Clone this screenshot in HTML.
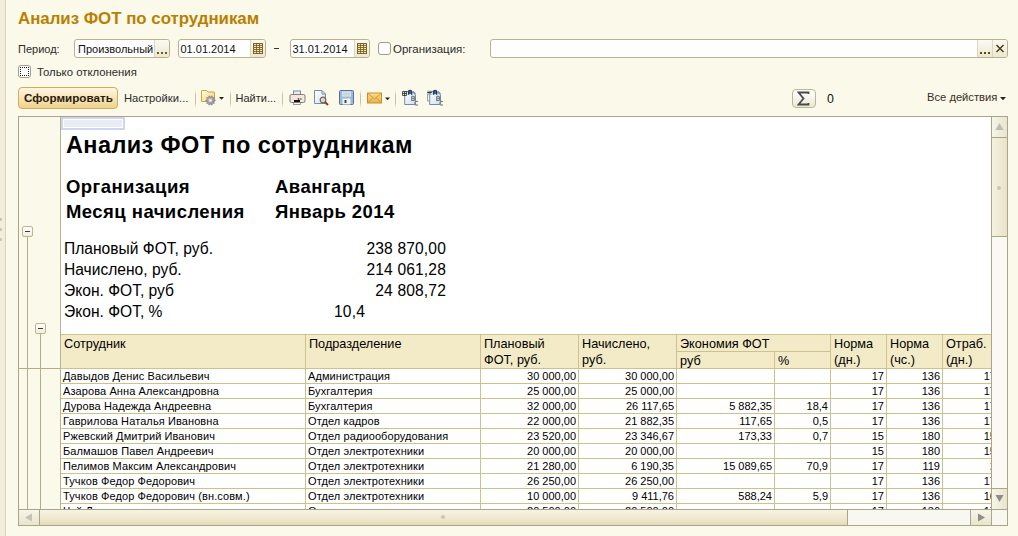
<!DOCTYPE html>
<html><head><meta charset="utf-8">
<style>
*{margin:0;padding:0;box-sizing:border-box}
html,body{width:1018px;height:536px;overflow:hidden;background:#FBF9EA;font-family:"Liberation Sans",sans-serif;font-size:11px;color:#222}
.a{position:absolute;white-space:nowrap}
.fld{position:absolute;background:#fff;border:1px solid #BBB18A;border-radius:3px}
.fb{position:absolute;border-left:1px solid #DCD6BE;background:linear-gradient(#FBFAF3,#ECE7D2)}
</style></head><body>

<div class="a" style="left:0px;top:0px;width:5px;height:536px;background:#F2EEDB"></div>
<div class="a" style="left:5px;top:0px;width:1px;height:536px;background:#D9D3BA"></div>
<div class="a" style="left:0px;top:218px;width:2px;height:3px;background:#C9C5B2;border-radius:0 1px 1px 0"></div>
<div class="a" style="left:0px;top:228px;width:2px;height:3px;background:#C9C5B2;border-radius:0 1px 1px 0"></div>
<div class="a" style="left:0px;top:238px;width:2px;height:3px;background:#C9C5B2;border-radius:0 1px 1px 0"></div>
<div class="a" style="top:9.61px;font-size:17px;line-height:17px;color:#B88000;font-weight:bold;left:18px;transform:scaleX(0.99);transform-origin:left;">Анализ ФОТ по сотрудникам</div>
<div class="a" style="top:43.69px;font-size:11px;line-height:11px;color:#2C2C2C;left:18px;">Период:</div>
<div class="fld" style="left:74px;top:39px;width:96px;height:19px"></div>
<div class="fb" style="left:154px;top:40px;width:15px;height:17px;border-radius:0 2px 2px 0"></div>
<div class="a" style="top:43.69px;font-size:11px;line-height:11px;color:#111;left:78px;">Произвольный</div>
<div class="a" style="left:157px;top:52px;width:10px;height:2px;background:repeating-linear-gradient(90deg,#6A5A24 0 2px,transparent 2px 4px)"></div>
<div class="fld" style="left:178px;top:39px;width:88px;height:19px"></div>
<div class="fb" style="left:250px;top:40px;width:15px;height:17px;border-radius:0 2px 2px 0"></div>
<svg class="a" style="left:253px;top:43px" width="10" height="11" viewBox="0 0 10 11"><rect x="0.5" y="0.5" width="9" height="10" fill="#F2E6B8" stroke="#7A6326"/><path d="M0 2.5H10M0 4.5H10M0 6.5H10M0 8.5H10M3.5 0V11M6.5 0V11" stroke="#7A6326" stroke-width="0.9"/></svg>
<div class="a" style="top:43.69px;font-size:11px;line-height:11px;color:#111;left:180.5px;">01.01.2014</div>
<div class="a" style="left:274px;top:48px;width:5px;height:1px;background:#333"></div>
<div class="fld" style="left:290px;top:39px;width:80px;height:19px"></div>
<div class="fb" style="left:354px;top:40px;width:15px;height:17px;border-radius:0 2px 2px 0"></div>
<svg class="a" style="left:357px;top:43px" width="10" height="11" viewBox="0 0 10 11"><rect x="0.5" y="0.5" width="9" height="10" fill="#F2E6B8" stroke="#7A6326"/><path d="M0 2.5H10M0 4.5H10M0 6.5H10M0 8.5H10M3.5 0V11M6.5 0V11" stroke="#7A6326" stroke-width="0.9"/></svg>
<div class="a" style="top:43.69px;font-size:11px;line-height:11px;color:#111;left:292.5px;">31.01.2014</div>
<div class="a" style="left:378px;top:42px;width:13px;height:13px;background:#fff;border:1px solid #A39C80;border-radius:3px"></div>
<div class="a" style="top:43.69px;font-size:11px;line-height:11px;color:#2C2C2C;left:393px;transform:scaleX(1.045);transform-origin:left;">Организация:</div>
<div class="fld" style="left:490px;top:39px;width:518px;height:19px"></div>
<div class="fb" style="left:977px;top:40px;width:15px;height:17px"></div>
<div class="fb" style="left:992px;top:40px;width:15px;height:17px;border-radius:0 2px 2px 0"></div>
<div class="a" style="left:980px;top:52px;width:10px;height:2px;background:repeating-linear-gradient(90deg,#5A4A14 0 2px,transparent 2px 4px)"></div>
<svg class="a" style="left:995px;top:44px" width="10" height="9" viewBox="0 0 10 9"><path d="M1.5 1L8.5 8M8.5 1L1.5 8" stroke="#4E3F10" stroke-width="1.5"/></svg>
<div class="a" style="left:18px;top:65px;width:13px;height:13px;background:#FFFFFF;border:1px solid #A49E82;border-radius:3px"></div>
<div class="a" style="left:20px;top:67px;width:9px;height:9px;border:1px dotted #10183A"></div>
<div class="a" style="top:66.69px;font-size:11px;line-height:11px;color:#2C2C2C;left:37.3px;transform:scaleX(1.03);transform-origin:left;">Только отклонения</div>
<div class="a" style="left:18px;top:87px;width:100px;height:22px;border:1px solid #D3AC5A;border-radius:4px;background:linear-gradient(#FDF6E2,#F6E5B8 50%,#EFD18E)"></div>
<div class="a" style="top:92.69px;font-size:11px;line-height:11px;color:#2A2010;font-weight:bold;left:23.5px;transform:scaleX(1.06);transform-origin:left;">Сформировать</div>
<div class="a" style="top:92.69px;font-size:11px;line-height:11px;color:#2C2C2C;left:123.5px;transform:scaleX(1.02);transform-origin:left;">Настройки...</div>
<div class="a" style="left:195px;top:90px;width:1px;height:18px;background:linear-gradient(rgba(200,190,150,0),#C9C0A0 30%,#C9C0A0 70%,rgba(200,190,150,0))"></div>
<div class="a" style="left:230px;top:90px;width:1px;height:18px;background:linear-gradient(rgba(200,190,150,0),#C9C0A0 30%,#C9C0A0 70%,rgba(200,190,150,0))"></div>
<div class="a" style="left:282px;top:90px;width:1px;height:18px;background:linear-gradient(rgba(200,190,150,0),#C9C0A0 30%,#C9C0A0 70%,rgba(200,190,150,0))"></div>
<div class="a" style="left:360px;top:90px;width:1px;height:18px;background:linear-gradient(rgba(200,190,150,0),#C9C0A0 30%,#C9C0A0 70%,rgba(200,190,150,0))"></div>
<div class="a" style="left:395px;top:90px;width:1px;height:18px;background:linear-gradient(rgba(200,190,150,0),#C9C0A0 30%,#C9C0A0 70%,rgba(200,190,150,0))"></div>
<div class="a" style="top:92.69px;font-size:11px;line-height:11px;color:#2C2C2C;left:235.5px;transform:scaleX(1.0);transform-origin:left;">Найти...</div>
<svg class="a" style="left:200px;top:89px" width="26" height="18" viewBox="0 0 26 18">
<defs><linearGradient id="fg" x1="0" y1="0" x2="1" y2="1"><stop offset="0" stop-color="#FFFDF0"/><stop offset="0.6" stop-color="#F8E49A"/><stop offset="1" stop-color="#EFCB62"/></linearGradient>
<radialGradient id="gg" cx="0.45" cy="0.45" r="0.6"><stop offset="0" stop-color="#F4F4F8"/><stop offset="0.3" stop-color="#B4B4BE"/><stop offset="1" stop-color="#7C7C88"/></radialGradient></defs>
<path d="M1.5 2Q1.5 1.5 2 1.5H6.5L8 3H14Q14.5 3 14.5 3.5V12Q14.5 12.5 14 12.5H2Q1.5 12.5 1.5 12Z" fill="url(#fg)" stroke="#CFA23A"/>
<path d="M13.96 10.95L15.18 11.06L15.18 11.94L13.96 12.05L13.62 13.09L14.55 13.89L14.03 14.61L12.97 13.97L12.09 14.62L12.37 15.81L11.53 16.09L11.05 14.96L9.95 14.96L9.47 16.09L8.63 15.81L8.91 14.62L8.03 13.97L6.97 14.61L6.45 13.89L7.38 13.09L7.04 12.05L5.82 11.94L5.82 11.06L7.04 10.95L7.38 9.91L6.45 9.11L6.97 8.39L8.03 9.03L8.91 8.38L8.63 7.19L9.47 6.91L9.95 8.04L11.05 8.04L11.53 6.91L12.37 7.19L12.09 8.38L12.97 9.03L14.03 8.39L14.55 9.11L13.62 9.91Z" fill="url(#gg)" stroke="#7E7E8A" stroke-width="0.6"/>
<circle cx="10.5" cy="11.5" r="1.2" fill="#F0F0F4"/>
<path d="M19 8H24L21.5 10.8Z" fill="#2A2212"/>
</svg>
<svg class="a" style="left:289px;top:90px" width="17" height="16" viewBox="0 0 17 16">
<rect x="4.5" y="1" width="7" height="4" fill="#E6EEF5" stroke="#7D8C9A"/>
<rect x="1" y="4.5" width="15" height="8" rx="1.5" fill="#EFE7E0" stroke="#8B7C70"/>
<rect x="5" y="10" width="6" height="2.5" fill="#111"/>
<rect x="4.5" y="12.5" width="7" height="2" fill="#F5F5F5" stroke="#777" stroke-width="0.7"/>
<circle cx="9.5" cy="9" r="0.9" fill="#E02020"/><circle cx="11.8" cy="9" r="0.9" fill="#20B040"/>
</svg>
<svg class="a" style="left:313px;top:89px" width="17" height="17" viewBox="0 0 17 17">
<defs><linearGradient id="pg" x1="0" y1="0" x2="1" y2="1"><stop offset="0" stop-color="#FFFFFF"/><stop offset="1" stop-color="#D6E4F2"/></linearGradient></defs>
<path d="M1.5 1.5H9L12.5 5V14.5H1.5Z" fill="url(#pg)" stroke="#6F8FAF"/>
<path d="M9 1.5V5H12.5" fill="none" stroke="#6F8FAF"/>
<circle cx="10" cy="11" r="2.8" fill="#C8DCF0" stroke="#8A6040" stroke-width="1.2"/>
<path d="M12 13L15 16" stroke="#7A4A25" stroke-width="2"/>
</svg>
<svg class="a" style="left:339px;top:90px" width="16" height="16" viewBox="0 0 16 16">
<rect x="0.5" y="0.5" width="14" height="14" rx="1" fill="#9DBAD4" stroke="#56728E"/>
<rect x="3" y="1.5" width="9" height="5" fill="#E8F0F6"/>
<path d="M3.5 3.2H11.5M3.5 5H11.5" stroke="#9DBAD4" stroke-width="0.8"/>
<rect x="3.5" y="8.5" width="8" height="6" fill="#F2F2F2"/>
<rect x="5.5" y="10" width="2" height="3" fill="#3A4A5A"/>
</svg>
<svg class="a" style="left:367px;top:92px" width="24" height="12" viewBox="0 0 24 12">
<defs><linearGradient id="mg" x1="0" y1="0" x2="0" y2="1"><stop offset="0" stop-color="#FBDC90"/><stop offset="1" stop-color="#EDB24A"/></linearGradient></defs>
<rect x="0.5" y="1" width="14" height="10" fill="url(#mg)" stroke="#C98D2A"/>
<path d="M1 1.5L7.5 7L14 1.5M1 10.5L5.5 6M14 10.5L9.5 6" fill="none" stroke="#C98D2A" stroke-width="0.8"/>
<path d="M18 5.5H23L20.5 8.2Z" fill="#2A2212"/>
</svg>
<svg class="a" style="left:401px;top:89px" width="19" height="18" viewBox="0 0 19 18">
<defs><linearGradient id="ag401" x1="0" y1="0" x2="1" y2="1"><stop offset="0" stop-color="#FFFFFF"/><stop offset="1" stop-color="#CFDEEF"/></linearGradient></defs>
<path d="M3.7 2.5H11L14.5 6V15.5H3.7Z" fill="url(#ag401)" stroke="#6C8CB0"/>
<path d="M12 2.5L14.5 5" stroke="#6C8CB0" stroke-width="1.2"/>
<path d="M1.5 2.5H5.5V6.5H1.5ZM1.5 4.5H5.5M3.5 2.5V6.5" stroke="#3A3A3A" stroke-width="0.9" fill="none"/>
<path d="M7.6 5.8V2.8Q7.6 1.4 9.1 1.4Q10.6 1.4 10.6 2.8V5.8M7.6 3.9H10.6" fill="none" stroke="#1E3A68" stroke-width="1.5"/>
<path d="M10.7 7.2V11.4H12.6Q13.8 11.4 13.8 10.3Q13.8 9.3 12.6 9.3H10.7M10.7 7.2H12.4Q13.5 7.2 13.5 8.2Q13.5 9.3 12.4 9.3" fill="none" stroke="#767676" stroke-width="1.1"/>
<path d="M16.9 12.9Q16.3 12.3 15.3 12.4Q13.8 12.6 13.8 14.3Q13.8 16 15.3 16.1Q16.3 16.2 16.9 15.6" fill="none" stroke="#808080" stroke-width="1.1"/>
</svg>
<svg class="a" style="left:426px;top:89px" width="19" height="18" viewBox="0 0 19 18">
<defs><linearGradient id="ag426" x1="0" y1="0" x2="1" y2="1"><stop offset="0" stop-color="#FFFFFF"/><stop offset="1" stop-color="#CFDEEF"/></linearGradient></defs>
<path d="M3.7 2.5H11L14.5 6V15.5H3.7Z" fill="url(#ag426)" stroke="#6C8CB0"/>
<path d="M12 2.5L14.5 5" stroke="#6C8CB0" stroke-width="1.2"/>
<path d="M1.2 2.2H5.8M1.2 5.2H5.8M1.5 5V12H3" stroke="#8A8A8A" stroke-width="0.8" fill="none"/><path d="M1.2 3.6H5.8" stroke="#222" stroke-width="1"/>
<path d="M7.6 5.8V2.8Q7.6 1.4 9.1 1.4Q10.6 1.4 10.6 2.8V5.8M7.6 3.9H10.6" fill="none" stroke="#1E3A68" stroke-width="1.5"/>
<path d="M10.7 7.2V11.4H12.6Q13.8 11.4 13.8 10.3Q13.8 9.3 12.6 9.3H10.7M10.7 7.2H12.4Q13.5 7.2 13.5 8.2Q13.5 9.3 12.4 9.3" fill="none" stroke="#767676" stroke-width="1.1"/>
<path d="M16.9 12.9Q16.3 12.3 15.3 12.4Q13.8 12.6 13.8 14.3Q13.8 16 15.3 16.1Q16.3 16.2 16.9 15.6" fill="none" stroke="#808080" stroke-width="1.1"/>
</svg>
<div class="a" style="left:792px;top:89px;width:24px;height:19px;border:1px solid #BDB593;border-radius:4px;background:linear-gradient(#FFFFFF,#F6F4EA 50%,#ECE8D4)"></div>
<svg class="a" style="left:797px;top:91px" width="14" height="15" viewBox="0 0 14 15"><path d="M11.5 3V1.5H1.5L6.5 7.5L1.5 13.5H11.5V12" fill="none" stroke="#4A4A4A" stroke-width="1.8" stroke-linejoin="miter"/></svg>
<div class="a" style="top:92.59px;font-size:12.3px;line-height:12.3px;color:#111;left:827px;">0</div>
<div class="a" style="top:92.43px;font-size:11.3px;line-height:11.3px;color:#3A2E1E;left:926.5px;transform:scaleX(0.99);transform-origin:left;">Все действия</div>
<svg class="a" style="left:1000px;top:97px" width="6" height="4" viewBox="0 0 6 4"><path d="M0 0H6L3 3.2Z" fill="#2A2212"/></svg>
<div class="a" style="left:18px;top:116px;width:990px;height:410px;border:1px solid #A9A48A;background:#FBF9EA"></div>
<div class="a" style="left:61px;top:117px;width:930px;height:392px;background:#fff"></div>
<div class="a" style="left:60px;top:117px;width:1px;height:392px;background:#B9B190"></div>
<div class="a" style="left:27px;top:237px;width:1px;height:272px;background:#B5AD88"></div>
<div class="a" style="left:40px;top:334px;width:1px;height:175px;background:#B5AD88"></div>
<div class="a" style="left:19px;top:368px;width:41px;height:1px;background:#B5AD88"></div>
<div class="a" style="left:22px;top:226px;width:11px;height:11px;border:1px solid #BDB592;border-radius:2px;background:linear-gradient(#FFFFFF,#F1EEDF)"></div>
<div class="a" style="left:25px;top:231px;width:5px;height:1px;background:#4A3A10"></div>
<div class="a" style="left:35px;top:323px;width:11px;height:11px;border:1px solid #BDB592;border-radius:2px;background:linear-gradient(#FFFFFF,#F1EEDF)"></div>
<div class="a" style="left:38px;top:328px;width:5px;height:1px;background:#4A3A10"></div>
<div class="a" style="left:61px;top:117px;width:64px;height:13px;border:2px solid #CDD5EF;background:#E9ECF7;box-shadow:inset 0 0 0 1px #fff"></div>
<div class="a" style="top:134.11px;font-size:23.5px;line-height:23.5px;color:#000;font-weight:bold;letter-spacing:0.4px;left:66px;">Анализ ФОТ по сотрудникам</div>
<div class="a" style="top:178.34px;font-size:18.5px;line-height:18.5px;color:#000;font-weight:bold;letter-spacing:0.45px;left:66px;">Организация</div>
<div class="a" style="top:203.34px;font-size:18.5px;line-height:18.5px;color:#000;font-weight:bold;letter-spacing:0.45px;left:66px;">Месяц начисления</div>
<div class="a" style="top:178.34px;font-size:18.5px;line-height:18.5px;color:#000;font-weight:bold;letter-spacing:0.45px;left:275px;">Авангард</div>
<div class="a" style="top:203.34px;font-size:18.5px;line-height:18.5px;color:#000;font-weight:bold;letter-spacing:0.45px;left:275px;">Январь 2014</div>
<div class="a" style="top:240.79px;font-size:15.6px;line-height:15.6px;color:#000;left:64px;">Плановый ФОТ, руб.</div>
<div class="a" style="top:240.79px;font-size:15.6px;line-height:15.6px;color:#000;letter-spacing:0.15px;right:572px;text-align:right;">238 870,00</div>
<div class="a" style="top:261.99px;font-size:15.6px;line-height:15.6px;color:#000;left:64px;">Начислено, руб.</div>
<div class="a" style="top:261.99px;font-size:15.6px;line-height:15.6px;color:#000;letter-spacing:0.15px;right:572px;text-align:right;">214 061,28</div>
<div class="a" style="top:282.79px;font-size:15.6px;line-height:15.6px;color:#000;left:64px;">Экон. ФОТ, руб</div>
<div class="a" style="top:282.79px;font-size:15.6px;line-height:15.6px;color:#000;letter-spacing:0.15px;right:572px;text-align:right;">24 808,72</div>
<div class="a" style="top:303.79px;font-size:15.6px;line-height:15.6px;color:#000;left:64px;">Экон. ФОТ, %</div>
<div class="a" style="top:303.79px;font-size:15.6px;line-height:15.6px;color:#000;letter-spacing:0.15px;right:653px;text-align:right;">10,4</div>
<div class="a" style="left:61px;top:334px;width:930px;height:34px;background:#F3EBC7"></div>
<div class="a" style="left:0;top:0;width:991px;height:509px;overflow:hidden">
<div class="a" style="left:61px;top:334px;width:940px;height:1px;background:#CCC28C"></div>
<div class="a" style="left:676px;top:351px;width:154px;height:1px;background:#CCC28C"></div>
<div class="a" style="left:61px;top:368px;width:940px;height:1px;background:#CCC28C"></div>
<div class="a" style="left:61px;top:383px;width:940px;height:1px;background:#CCC28C"></div>
<div class="a" style="left:61px;top:398px;width:940px;height:1px;background:#CCC28C"></div>
<div class="a" style="left:61px;top:413px;width:940px;height:1px;background:#CCC28C"></div>
<div class="a" style="left:61px;top:428px;width:940px;height:1px;background:#CCC28C"></div>
<div class="a" style="left:61px;top:443px;width:940px;height:1px;background:#CCC28C"></div>
<div class="a" style="left:61px;top:458px;width:940px;height:1px;background:#CCC28C"></div>
<div class="a" style="left:61px;top:473px;width:940px;height:1px;background:#CCC28C"></div>
<div class="a" style="left:61px;top:488px;width:940px;height:1px;background:#CCC28C"></div>
<div class="a" style="left:61px;top:503px;width:940px;height:1px;background:#CCC28C"></div>
<div class="a" style="left:61px;top:518px;width:940px;height:1px;background:#CCC28C"></div>
<div class="a" style="left:305px;top:334px;width:1px;height:175px;background:#CCC28C"></div>
<div class="a" style="left:480px;top:334px;width:1px;height:175px;background:#CCC28C"></div>
<div class="a" style="left:578px;top:334px;width:1px;height:175px;background:#CCC28C"></div>
<div class="a" style="left:676px;top:334px;width:1px;height:175px;background:#CCC28C"></div>
<div class="a" style="left:774px;top:351px;width:1px;height:158px;background:#CCC28C"></div>
<div class="a" style="left:830px;top:334px;width:1px;height:175px;background:#CCC28C"></div>
<div class="a" style="left:886px;top:334px;width:1px;height:175px;background:#CCC28C"></div>
<div class="a" style="left:942px;top:334px;width:1px;height:175px;background:#CCC28C"></div>
<div class="a" style="top:338.25px;font-size:12.7px;line-height:12.7px;color:#000;left:64px;">Сотрудник</div>
<div class="a" style="top:338.25px;font-size:12.7px;line-height:12.7px;color:#000;left:309px;">Подразделение</div>
<div class="a" style="top:338.25px;font-size:12.7px;line-height:12.7px;color:#000;left:484px;">Плановый</div>
<div class="a" style="top:354.25px;font-size:12.7px;line-height:12.7px;color:#000;left:484px;">ФОТ, руб.</div>
<div class="a" style="top:338.25px;font-size:12.7px;line-height:12.7px;color:#000;left:582px;">Начислено,</div>
<div class="a" style="top:354.25px;font-size:12.7px;line-height:12.7px;color:#000;left:582px;">руб.</div>
<div class="a" style="top:338.25px;font-size:12.7px;line-height:12.7px;color:#000;left:680px;">Экономия ФОТ</div>
<div class="a" style="top:354.75px;font-size:12.7px;line-height:12.7px;color:#000;left:680px;">руб</div>
<div class="a" style="top:354.75px;font-size:12.7px;line-height:12.7px;color:#000;left:778px;">%</div>
<div class="a" style="top:338.25px;font-size:12.7px;line-height:12.7px;color:#000;left:834px;">Норма</div>
<div class="a" style="top:354.25px;font-size:12.7px;line-height:12.7px;color:#000;left:834px;">(дн.)</div>
<div class="a" style="top:338.25px;font-size:12.7px;line-height:12.7px;color:#000;left:890px;">Норма</div>
<div class="a" style="top:354.25px;font-size:12.7px;line-height:12.7px;color:#000;left:890px;">(чс.)</div>
<div class="a" style="top:338.25px;font-size:12.7px;line-height:12.7px;color:#000;left:946px;">Отраб.</div>
<div class="a" style="top:354.25px;font-size:12.7px;line-height:12.7px;color:#000;left:946px;">(дн.)</div>
<div class="a" style="top:370.69px;font-size:11px;line-height:11px;color:#000;letter-spacing:0.1px;left:63px;">Давыдов Денис Васильевич</div>
<div class="a" style="top:370.69px;font-size:11px;line-height:11px;color:#000;letter-spacing:0.1px;left:308px;">Администрация</div>
<div class="a" style="top:370.69px;font-size:11px;line-height:11px;color:#000;right:415px;text-align:right;">30 000,00</div>
<div class="a" style="top:370.69px;font-size:11px;line-height:11px;color:#000;right:317px;text-align:right;">30 000,00</div>
<div class="a" style="top:370.69px;font-size:11px;line-height:11px;color:#000;right:107px;text-align:right;">17</div>
<div class="a" style="top:370.69px;font-size:11px;line-height:11px;color:#000;right:51px;text-align:right;">136</div>
<div class="a" style="top:370.69px;font-size:11px;line-height:11px;color:#000;right:-5px;text-align:right;">17</div>
<div class="a" style="top:385.69px;font-size:11px;line-height:11px;color:#000;letter-spacing:0.1px;left:63px;">Азарова Анна Александровна</div>
<div class="a" style="top:385.69px;font-size:11px;line-height:11px;color:#000;letter-spacing:0.1px;left:308px;">Бухгалтерия</div>
<div class="a" style="top:385.69px;font-size:11px;line-height:11px;color:#000;right:415px;text-align:right;">25 000,00</div>
<div class="a" style="top:385.69px;font-size:11px;line-height:11px;color:#000;right:317px;text-align:right;">25 000,00</div>
<div class="a" style="top:385.69px;font-size:11px;line-height:11px;color:#000;right:107px;text-align:right;">17</div>
<div class="a" style="top:385.69px;font-size:11px;line-height:11px;color:#000;right:51px;text-align:right;">136</div>
<div class="a" style="top:385.69px;font-size:11px;line-height:11px;color:#000;right:-5px;text-align:right;">17</div>
<div class="a" style="top:400.69px;font-size:11px;line-height:11px;color:#000;letter-spacing:0.1px;left:63px;">Дурова Надежда Андреевна</div>
<div class="a" style="top:400.69px;font-size:11px;line-height:11px;color:#000;letter-spacing:0.1px;left:308px;">Бухгалтерия</div>
<div class="a" style="top:400.69px;font-size:11px;line-height:11px;color:#000;right:415px;text-align:right;">32 000,00</div>
<div class="a" style="top:400.69px;font-size:11px;line-height:11px;color:#000;right:317px;text-align:right;">26 117,65</div>
<div class="a" style="top:400.69px;font-size:11px;line-height:11px;color:#000;right:219px;text-align:right;">5 882,35</div>
<div class="a" style="top:400.69px;font-size:11px;line-height:11px;color:#000;right:163px;text-align:right;">18,4</div>
<div class="a" style="top:400.69px;font-size:11px;line-height:11px;color:#000;right:107px;text-align:right;">17</div>
<div class="a" style="top:400.69px;font-size:11px;line-height:11px;color:#000;right:51px;text-align:right;">136</div>
<div class="a" style="top:400.69px;font-size:11px;line-height:11px;color:#000;right:-5px;text-align:right;">17</div>
<div class="a" style="top:415.69px;font-size:11px;line-height:11px;color:#000;letter-spacing:0.1px;left:63px;">Гаврилова Наталья Ивановна</div>
<div class="a" style="top:415.69px;font-size:11px;line-height:11px;color:#000;letter-spacing:0.1px;left:308px;">Отдел кадров</div>
<div class="a" style="top:415.69px;font-size:11px;line-height:11px;color:#000;right:415px;text-align:right;">22 000,00</div>
<div class="a" style="top:415.69px;font-size:11px;line-height:11px;color:#000;right:317px;text-align:right;">21 882,35</div>
<div class="a" style="top:415.69px;font-size:11px;line-height:11px;color:#000;right:219px;text-align:right;">117,65</div>
<div class="a" style="top:415.69px;font-size:11px;line-height:11px;color:#000;right:163px;text-align:right;">0,5</div>
<div class="a" style="top:415.69px;font-size:11px;line-height:11px;color:#000;right:107px;text-align:right;">17</div>
<div class="a" style="top:415.69px;font-size:11px;line-height:11px;color:#000;right:51px;text-align:right;">136</div>
<div class="a" style="top:415.69px;font-size:11px;line-height:11px;color:#000;right:-5px;text-align:right;">17</div>
<div class="a" style="top:430.69px;font-size:11px;line-height:11px;color:#000;letter-spacing:0.1px;left:63px;">Ржевский Дмитрий Иванович</div>
<div class="a" style="top:430.69px;font-size:11px;line-height:11px;color:#000;letter-spacing:0.1px;left:308px;">Отдел радиооборудования</div>
<div class="a" style="top:430.69px;font-size:11px;line-height:11px;color:#000;right:415px;text-align:right;">23 520,00</div>
<div class="a" style="top:430.69px;font-size:11px;line-height:11px;color:#000;right:317px;text-align:right;">23 346,67</div>
<div class="a" style="top:430.69px;font-size:11px;line-height:11px;color:#000;right:219px;text-align:right;">173,33</div>
<div class="a" style="top:430.69px;font-size:11px;line-height:11px;color:#000;right:163px;text-align:right;">0,7</div>
<div class="a" style="top:430.69px;font-size:11px;line-height:11px;color:#000;right:107px;text-align:right;">15</div>
<div class="a" style="top:430.69px;font-size:11px;line-height:11px;color:#000;right:51px;text-align:right;">180</div>
<div class="a" style="top:430.69px;font-size:11px;line-height:11px;color:#000;right:-5px;text-align:right;">15</div>
<div class="a" style="top:445.69px;font-size:11px;line-height:11px;color:#000;letter-spacing:0.1px;left:63px;">Балмашов Павел Андреевич</div>
<div class="a" style="top:445.69px;font-size:11px;line-height:11px;color:#000;letter-spacing:0.1px;left:308px;">Отдел электротехники</div>
<div class="a" style="top:445.69px;font-size:11px;line-height:11px;color:#000;right:415px;text-align:right;">20 000,00</div>
<div class="a" style="top:445.69px;font-size:11px;line-height:11px;color:#000;right:317px;text-align:right;">20 000,00</div>
<div class="a" style="top:445.69px;font-size:11px;line-height:11px;color:#000;right:107px;text-align:right;">15</div>
<div class="a" style="top:445.69px;font-size:11px;line-height:11px;color:#000;right:51px;text-align:right;">180</div>
<div class="a" style="top:445.69px;font-size:11px;line-height:11px;color:#000;right:-5px;text-align:right;">15</div>
<div class="a" style="top:460.69px;font-size:11px;line-height:11px;color:#000;letter-spacing:0.1px;left:63px;">Пелимов Максим Александрович</div>
<div class="a" style="top:460.69px;font-size:11px;line-height:11px;color:#000;letter-spacing:0.1px;left:308px;">Отдел электротехники</div>
<div class="a" style="top:460.69px;font-size:11px;line-height:11px;color:#000;right:415px;text-align:right;">21 280,00</div>
<div class="a" style="top:460.69px;font-size:11px;line-height:11px;color:#000;right:317px;text-align:right;">6 190,35</div>
<div class="a" style="top:460.69px;font-size:11px;line-height:11px;color:#000;right:219px;text-align:right;">15 089,65</div>
<div class="a" style="top:460.69px;font-size:11px;line-height:11px;color:#000;right:163px;text-align:right;">70,9</div>
<div class="a" style="top:460.69px;font-size:11px;line-height:11px;color:#000;right:107px;text-align:right;">17</div>
<div class="a" style="top:460.69px;font-size:11px;line-height:11px;color:#000;right:51px;text-align:right;">119</div>
<div class="a" style="top:460.69px;font-size:11px;line-height:11px;color:#000;right:-5px;text-align:right;">2</div>
<div class="a" style="top:475.69px;font-size:11px;line-height:11px;color:#000;letter-spacing:0.1px;left:63px;">Тучков Федор Федорович</div>
<div class="a" style="top:475.69px;font-size:11px;line-height:11px;color:#000;letter-spacing:0.1px;left:308px;">Отдел электротехники</div>
<div class="a" style="top:475.69px;font-size:11px;line-height:11px;color:#000;right:415px;text-align:right;">26 250,00</div>
<div class="a" style="top:475.69px;font-size:11px;line-height:11px;color:#000;right:317px;text-align:right;">26 250,00</div>
<div class="a" style="top:475.69px;font-size:11px;line-height:11px;color:#000;right:107px;text-align:right;">17</div>
<div class="a" style="top:475.69px;font-size:11px;line-height:11px;color:#000;right:51px;text-align:right;">136</div>
<div class="a" style="top:475.69px;font-size:11px;line-height:11px;color:#000;right:-5px;text-align:right;">17</div>
<div class="a" style="top:490.69px;font-size:11px;line-height:11px;color:#000;letter-spacing:0.1px;left:63px;">Тучков Федор Федорович (вн.совм.)</div>
<div class="a" style="top:490.69px;font-size:11px;line-height:11px;color:#000;letter-spacing:0.1px;left:308px;">Отдел электротехники</div>
<div class="a" style="top:490.69px;font-size:11px;line-height:11px;color:#000;right:415px;text-align:right;">10 000,00</div>
<div class="a" style="top:490.69px;font-size:11px;line-height:11px;color:#000;right:317px;text-align:right;">9 411,76</div>
<div class="a" style="top:490.69px;font-size:11px;line-height:11px;color:#000;right:219px;text-align:right;">588,24</div>
<div class="a" style="top:490.69px;font-size:11px;line-height:11px;color:#000;right:163px;text-align:right;">5,9</div>
<div class="a" style="top:490.69px;font-size:11px;line-height:11px;color:#000;right:107px;text-align:right;">17</div>
<div class="a" style="top:490.69px;font-size:11px;line-height:11px;color:#000;right:51px;text-align:right;">136</div>
<div class="a" style="top:490.69px;font-size:11px;line-height:11px;color:#000;right:-5px;text-align:right;">16</div>
<div class="a" style="top:505.69px;font-size:11px;line-height:11px;color:#000;letter-spacing:0.1px;left:63px;">Чуй Лариса</div>
<div class="a" style="top:505.69px;font-size:11px;line-height:11px;color:#000;letter-spacing:0.1px;left:308px;">Отдел электротехники</div>
<div class="a" style="top:505.69px;font-size:11px;line-height:11px;color:#000;right:415px;text-align:right;">20 500,00</div>
<div class="a" style="top:505.69px;font-size:11px;line-height:11px;color:#000;right:317px;text-align:right;">20 500,00</div>
<div class="a" style="top:505.69px;font-size:11px;line-height:11px;color:#000;right:107px;text-align:right;">17</div>
<div class="a" style="top:505.69px;font-size:11px;line-height:11px;color:#000;right:51px;text-align:right;">136</div>
<div class="a" style="top:505.69px;font-size:11px;line-height:11px;color:#000;right:-5px;text-align:right;">17</div>
</div>
<div class="a" style="left:991px;top:116px;width:17px;height:394px;border-left:1px solid #A9A48A;border-top:1px solid #A9A48A;border-right:1px solid #A9A48A;background:#FAF9F3"></div>
<div class="a" style="left:991px;top:116px;width:17px;height:22px;border:1px solid #A9A48A;background:linear-gradient(90deg,#F7F5EA,#E9E4CC)"></div>
<svg class="a" style="left:995px;top:122px" width="9" height="9" viewBox="0 0 9 9"><path d="M4.5 1L8.5 8H0.5Z" fill="#BDBAB0"/></svg>
<div class="a" style="left:991px;top:137px;width:17px;height:100px;border:1px solid #A9A48A;background:linear-gradient(90deg,#F5F2E2,#E8E2C6)"></div>
<div class="a" style="left:997px;top:186px;width:4px;height:4px;border-radius:50%;background:#C9C5B5"></div>
<div class="a" style="left:991px;top:488px;width:17px;height:22px;border:1px solid #A9A48A;background:linear-gradient(90deg,#F7F5EA,#E9E4CC)"></div>
<svg class="a" style="left:995px;top:494px" width="9" height="9" viewBox="0 0 9 9"><path d="M0.5 1H8.5L4.5 8Z" fill="#8E8C86"/></svg>
<div class="a" style="left:18px;top:509px;width:974px;height:17px;border:1px solid #A9A48A;background:#F8F7F0"></div>
<div class="a" style="left:18px;top:509px;width:22px;height:17px;border:1px solid #A9A48A;background:linear-gradient(#F7F5EA,#E9E4CC)"></div>
<svg class="a" style="left:24px;top:513px" width="9" height="9" viewBox="0 0 9 9"><path d="M1 4.5L8 0.5V8.5Z" fill="#C4C1B6"/></svg>
<div class="a" style="left:39px;top:509px;width:809px;height:17px;border:1px solid #A9A48A;background:linear-gradient(#F6F3E3,#EFE8CC 60%,#E3DBBA)"></div>
<div class="a" style="left:441px;top:515px;width:4px;height:4px;border-radius:50%;background:#C9C5B5"></div>
<div class="a" style="left:970px;top:509px;width:22px;height:17px;border:1px solid #A9A48A;background:linear-gradient(#F7F5EA,#E9E4CC)"></div>
<svg class="a" style="left:977px;top:513px" width="9" height="9" viewBox="0 0 9 9"><path d="M1 0.5L8 4.5L1 8.5Z" fill="#8E8C86"/></svg>
<div class="a" style="left:991px;top:509px;width:17px;height:17px;border:1px solid #A9A48A;background:#F8F7F0"></div>
</body></html>
